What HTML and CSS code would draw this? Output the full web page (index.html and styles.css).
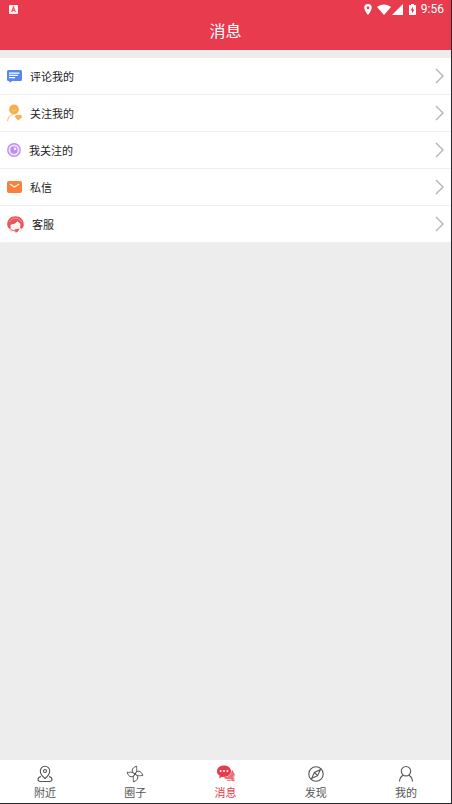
FILE: index.html
```html
<!DOCTYPE html>
<html lang="zh-CN">
<head>
<meta charset="utf-8">
<meta name="viewport" content="width=device-width, initial-scale=1">
<title>消息</title>
<link rel="stylesheet" href="styles.css">
</head>
<body>
<div class="app">
  <header class="header">
    <div class="status">
      <svg class="status-app" width="9" height="9" viewBox="0 0 9 9"><rect width="9" height="9" rx="1" fill="#fff3f3"/><path d="M2.6 7 4.5 2.2 6.4 7M3.3 5.4h2.4" fill="none" stroke="#e95b68" stroke-width="1.2"/></svg>
      <svg class="status-pin" width="8" height="11" viewBox="0 0 8 11"><path fill="#fff" fill-rule="evenodd" d="M4 0a3.7 3.7 0 0 0-3.7 3.8C.3 6.600 4 11 4 11s3.700-4.400 3.700-7.200A3.700 3.700 0 0 0 4 0zm0 2.400a1.400 1.400 0 1 1 0 2.800 1.400 1.400 0 0 1 0-2.800z"/></svg>
      <svg class="status-wifi" width="14" height="11" viewBox="0 0 14 11"><path fill="#fff" d="M0 3C4-.5 10-.5 14 3L7 11z"/></svg>
      <svg class="status-signal" width="11" height="11" viewBox="0 0 11 11"><path fill="#fff" d="M11 0v11H0z"/></svg>
      <svg class="status-battery" width="7" height="11" viewBox="0 0 7 11"><path fill="#fff" d="M2 0h3v1h1.500q.5 0 .5.500v9q0 .5-.5.5h-6Q0 11 0 10.500v-9Q0 1 .5 1H2z"/><path fill="#e93b4e" d="M4 2.600 1.500 6.500H3v3l2.500-4H4z"/></svg>
      <span class="time">9:56</span>
    </div>
    <h1 class="title">消息</h1>
  </header>
  <main class="content">
    <nav class="list">
      <a class="row" href="#comments">
        <svg width="15" height="14" viewBox="0 0 15 14"><path fill="#5588ee" d="M1.500 1h12Q15 1 15 2.500v8q0 1.500-1.500 1.500H5l-2 1.700L2 12h-.5Q0 12 0 10.500v-8Q0 1 1.500 1z"/><path stroke="#fff" stroke-width="1.200" d="M2 4.200h10.500M2 6.400h9M2 8.600h6"/></svg>
        <span>评论我的</span>
        <svg class="chevron" width="9" height="16" viewBox="0 0 9 16"><path d="m1 1 7 7-7 7"/></svg>
      </a>
      <a class="row" href="#followers">
        <svg width="15" height="18" viewBox="0 0 15 18"><circle cx="7" cy="5.500" r="4.900" fill="#f8b04f"/><path d="M.7 16.500c.3-3 2-5 4.800-6" fill="none" stroke="#f9c987" stroke-width="1.300" stroke-linecap="round"/><path fill="#f8b04f" d="M11.300 16.500 8.500 13.800c-1.300-1.300.2-4 2.800-2.500 2.600-1.500 4.500 1.200 3.200 2.500z"/><path d="M5 6q2 2 4 0" fill="none" stroke="#ffc476"/></svg>
        <span>关注我的</span>
        <svg class="chevron" width="9" height="16" viewBox="0 0 9 16"><path d="m1 1 7 7-7 7"/></svg>
      </a>
      <a class="row" href="#following">
        <svg width="14" height="14" viewBox="0 0 14 14"><circle cx="7" cy="7" r="6.200" fill="#f1e3ff" stroke="#bd91ed" stroke-width="1.400"/><circle cx="7" cy="7" r="3.700" fill="#bd8df0"/><circle cx="8" cy="5.900" r="1.300" fill="#f7eeff"/></svg>
        <span>我关注的</span>
        <svg class="chevron" width="9" height="16" viewBox="0 0 9 16"><path d="m1 1 7 7-7 7"/></svg>
      </a>
      <a class="row" href="#messages">
        <svg width="15" height="12" viewBox="0 0 15 12"><rect width="15" height="12" rx="2" fill="#fa803c"/><path d="m3 3.200 4.500 2.800L12 3.200" fill="none" stroke="#fff0dd" stroke-width="1.400"/></svg>
        <span>私信</span>
        <svg class="chevron" width="9" height="16" viewBox="0 0 9 16"><path d="m1 1 7 7-7 7"/></svg>
      </a>
      <a class="row" href="#service">
        <svg width="17" height="17" viewBox="0 0 17 17"><path fill="#e9575a" d="M.2 8.500C.2 3.500 3.700.3 8.500.3s8.300 3.200 8.300 8.200c0 2-.8 3.300-2 4.300l-1.600-.3V7.500L10.500 5.500 8 7.800 3.700 9v3.800l-1.500-.3C1 11.500.2 10.300.2 8.500z"/><path d="M2.300 6C3.700 3.300 5.800 2.200 8.500 2.200s4.800 1.100 6.200 3.800" fill="none" stroke="#f7a6a3" stroke-width=".8"/><path fill="#fff5f2" d="M3.700 8.800C6.500 8.500 9 7.500 10.300 5.500c.5 1 1.500 1.800 3 2.300 0 4-2 6.400-4.800 6.400S3.700 12 3.700 8.800z"/><path d="M3 12.500c1 1.500 2.500 2.200 5 2.300" fill="none" stroke="#e9575a"/><path fill="#e9575a" d="M7.500 13.500 12.800 12.500 11 15.500 8.700 16.800z"/><path d="M2.200 13.500 4.500 16M14.500 13.500 12.800 16" stroke="#f6c4bf"/></svg>
        <span>客服</span>
        <svg class="chevron" width="9" height="16" viewBox="0 0 9 16"><path d="m1 1 7 7-7 7"/></svg>
      </a>
    </nav>
  </main>
  <nav class="tabs">
    <a class="tab" href="#nearby">
      <svg width="18" height="18" viewBox="0 0 18 18"><path d="M9 13.500S4.300 9.600 4.300 6a4.700 4.700 0 0 1 9.400 0c0 3.600-4.700 7.500-4.700 7.500z"/><circle cx="9" cy="6" r="1.500"/><path d="M5 11.500c-2 .6-3 1.600-3 2.800 0 1.700 1 2.200 2.500 2.200h9c1.500 0 2.500-.5 2.500-2.200 0-1.200-1-2.200-3-2.800"/></svg>
      <span>附近</span>
    </a>
    <a class="tab" href="#circles">
      <svg class="pinwheel" width="18" height="18" viewBox="0 0 18 18"><g id="blade"><path d="M9 9C5 7.500 5 2.500 10.800 1.200 9.800 3 12.300 5 9 9"/></g><use href="#blade" transform="rotate(90 9 9)"/><use href="#blade" transform="rotate(180 9 9)"/><use href="#blade" transform="rotate(270 9 9)"/></svg>
      <span>圈子</span>
    </a>
    <a class="tab active" href="#news" aria-current="page">
      <svg width="18" height="18" viewBox="0 0 18 18"><path fill="#e93b4e" stroke="none" d="M7 .5c4.200 0 7 2.400 7 5.700s-2.800 5.700-7 5.700q-1 0-2-.2L2.200 13.500l.4-3C.9 9.500 0 8 0 6.200 0 2.900 2.800.5 7 .5z"/><g fill="#fff" stroke="none"><circle cx="3.600" cy="6" r="1"/><circle cx="7" cy="6" r="1"/><circle cx="10.400" cy="6" r="1"/></g><path d="M15 5.500c2 2 1.800 4.700.2 6.300l.6 2.700-2.700-1.300c-2 .7-4 .5-5.600-.4 4.500-.3 7.600-3 7.500-7.300z" fill="#ef7480" stroke-width=".7"/><path d="M17.200 8.500q.3 2-.7 4l.7 3.500-3.300-1q-2 .7-4 .2" stroke-width=".8"/></svg>
      <span>消息</span>
    </a>
    <a class="tab" href="#discover">
      <svg width="18" height="18" viewBox="0 0 18 18"><circle cx="9" cy="9" r="7.200"/><path d="m13.300 4.700-2.700 6-5.900 2.600 2.700-5.900zM7.400 7.400l3.200 3.300"/></svg>
      <span>发现</span>
    </a>
    <a class="tab" href="#me">
      <svg width="18" height="18" viewBox="0 0 18 18"><circle cx="9" cy="6.200" r="4.700"/><path d="M6.300 10.200C4 11.300 2.700 13.300 2.500 16.500M11.700 10.200c2.300 1.100 3.600 3.100 3.800 6.300"/></svg>
      <span>我的</span>
    </a>
  </nav>
</div>
</body>
</html>
```
FILE: styles.css
```css
* {
  box-sizing: border-box;
}

body {
  margin: 0;
  font-family: Roboto, "Noto Sans CJK SC", sans-serif;
  background: #ededed;
}

.app {
  display: flex;
  flex-direction: column;
  min-height: 100vh;
  border-right: 1px solid #29292c;
  border-bottom: 1px solid #29292c;
}

.header {
  padding-bottom: 6px;
  background: #e93b4e;
  color: #fff;
}

.status {
  display: flex;
  align-items: center;
  height: 19px;
  padding: 0 7px 0 9px;
}

.status-pin {
  margin-left: auto;
}

.status-wifi {
  margin-left: 5px;
}

.status-signal {
  margin-left: 1px;
}

.status-battery {
  margin: 0 5px 0 6px;
}

.time {
  font-size: 12px;
  line-height: 19px;
}

.title {
  margin: 0;
  font-size: 16px;
  font-weight: 400;
  line-height: 25px;
  text-align: center;
}

.content {
  flex: 1;
  padding-top: 8px;
}

.row {
  display: flex;
  align-items: center;
  gap: 8px;
  height: 37px;
  padding: 0 7px;
  border-bottom: 1px solid #efefef;
  background: #fff;
  color: #222;
  font-size: 11px;
  text-decoration: none;
}

.chevron {
  margin-left: auto;
  fill: none;
  stroke: #b4b4b4;
  stroke-width: 1.4;
}

.tabs {
  display: flex;
  background: #fff;
}

.tab {
  display: flex;
  flex: 1;
  flex-direction: column;
  align-items: center;
  gap: 2px;
  padding-top: 5px;
  color: #555;
  font-size: 11px;
  line-height: 18px;
  text-decoration: none;
}

.tab svg {
  fill: none;
  stroke: currentColor;
  stroke-width: 1.1;
}

.tab .pinwheel {
  stroke-width: 1;
}

.tab.active {
  color: #e93b4e;
}
```
